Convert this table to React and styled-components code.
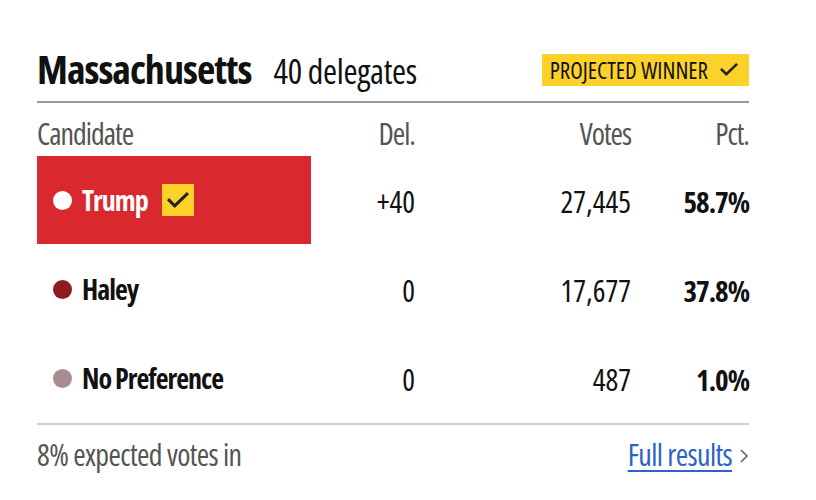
import React from 'react';
import styled, {createGlobalStyle} from 'styled-components';

const GlobalStyle = createGlobalStyle`
  body {
    margin: 0;
    background: #fff;
    font-family: "Open Sans", "Roboto", sans-serif;
    font-stretch: 75%;
  }
`

const candidates = [
    {name: 'Trump', color: '#fff', del: '+40', votes: '27,445', pct: '58.7%', winner: true},
    {name: 'Haley', color: '#8c1c21', del: '0', votes: '17,677', pct: '37.8%'},
    {name: 'No Preference', color: '#a68d8f', del: '0', votes: '487', pct: '1.0%'},
]

const Check = ({width = 18}) => (
    <svg width={width} height={width * 0.75} viewBox="0 0 20 15" fill="none">
        <path d="M2 7.5l5 5L18 2" stroke="#222" strokeWidth="2.8" strokeLinecap="square"/>
    </svg>
)

const App = () => {
    return (
        <>
            <GlobalStyle/>
            <Card>
                <Header>
                    <Title>
                        <State>Massachusetts</State>
                        <Delegates>40 delegates</Delegates>
                    </Title>
                    <Badge>PROJECTED WINNER <Check width={18}/></Badge>
                </Header>
                <Table>
                    <HeadCell>Candidate</HeadCell>
                    <HeadCell $right>Del.</HeadCell>
                    <HeadCell $right>Votes</HeadCell>
                    <HeadCell $right>Pct.</HeadCell>
                    {candidates.map(c => (
                        <React.Fragment key={c.name}>
                            <NameCell $winner={c.winner}>
                                <Dot $color={c.color}/>
                                <Name $winner={c.winner}>{c.name}</Name>
                                {c.winner && <WinBox><Check width={22}/></WinBox>}
                            </NameCell>
                            <NumCell>{c.del}</NumCell>
                            <NumCell>{c.votes}</NumCell>
                            <NumCell $bold>{c.pct}</NumCell>
                        </React.Fragment>
                    ))}
                </Table>
                <Footer>
                    <Reporting>8% expected votes in</Reporting>
                    <FullLink href="#">Full results</FullLink>
                    <Chevron>
                        <svg width="10" height="16" viewBox="0 0 10 16" fill="none">
                            <path d="M2 2l6 6-6 6" stroke="#666" strokeWidth="1.6"/>
                        </svg>
                    </Chevron>
                </Footer>
            </Card>
        </>
    );
};

const Card = styled.div`
  width: 712px;
  margin: 40px 0 0 37px;
`

const Header = styled.div`
  box-sizing: border-box;
  height: 63px;
  display: flex;
  align-items: flex-end;
  justify-content: space-between;
  padding-bottom: 12px;
  border-bottom: 2px solid #9a9a9a;
`

const Title = styled.div`
  display: flex;
  align-items: baseline;
  gap: 22px;
  line-height: 1;
`

const State = styled.span`
  font-size: 40px;
  font-weight: 700;
  letter-spacing: -1px;
  color: #111;
`

const Delegates = styled.span`
  font-size: 34px;
  letter-spacing: -0.3px;
  color: #111;
`

const Badge = styled.div`
  display: flex;
  align-items: center;
  gap: 12px;
  margin-bottom: 3px;
  background: #fcd12a;
  padding: 0 11px 0 8px;
  height: 32px;
  font-size: 23px;
  font-weight: 500;
  color: #111;
`

const Table = styled.div`
  display: grid;
  grid-template-columns: 274px 104px 216px 118px;
  grid-template-rows: 53px;
  grid-auto-rows: 89px;
  border-bottom: 2px solid #cfcfcf;
`

const HeadCell = styled.div`
  display: flex;
  align-items: flex-end;
  justify-content: ${p => p.$right ? 'flex-end' : 'flex-start'};
  padding-bottom: 7px;
  line-height: 1;
  font-size: 30px;
  letter-spacing: -1px;
  color: #555;
`

const NameCell = styled.div`
  display: flex;
  align-items: center;
  padding-left: 16px;
  background: ${p => p.$winner ? '#d9292f' : 'transparent'};
  height: 88px;
`

const Dot = styled.span`
  width: 19px;
  height: 19px;
  border-radius: 50%;
  background: ${p => p.$color};
  margin-right: 10px;
`

const Name = styled.span`
  font-size: 28px;
  font-weight: 700;
  letter-spacing: -1px;
  color: ${p => p.$winner ? '#fff' : '#111'};
`

const WinBox = styled.span`
  display: flex;
  align-items: center;
  justify-content: center;
  width: 32px;
  height: 32px;
  background: #fcd12a;
  margin-left: 14px;
`

const NumCell = styled.div`
  display: flex;
  align-items: center;
  justify-content: flex-end;
  padding-top: 2px;
  font-size: ${p => p.$bold ? 29 : 30}px;
  font-weight: ${p => p.$bold ? 700 : 400};
  letter-spacing: ${p => p.$bold ? '-1px' : '0'};
  color: #111;
`

const Footer = styled.div`
  display: flex;
  align-items: center;
  height: 58px;
`

const Reporting = styled.span`
  font-size: 30px;
  letter-spacing: -0.6px;
  color: #555;
  flex: 1;
`

const FullLink = styled.a`
  font-size: 30px;
  letter-spacing: -0.6px;
  color: #2d62c9;
  text-decoration: underline;
  text-decoration-thickness: 2px;
  text-underline-offset: 4px;
`

const Chevron = styled.span`
  display: flex;
  margin-left: 7px;
  padding-top: 4px;
`

export default App;
